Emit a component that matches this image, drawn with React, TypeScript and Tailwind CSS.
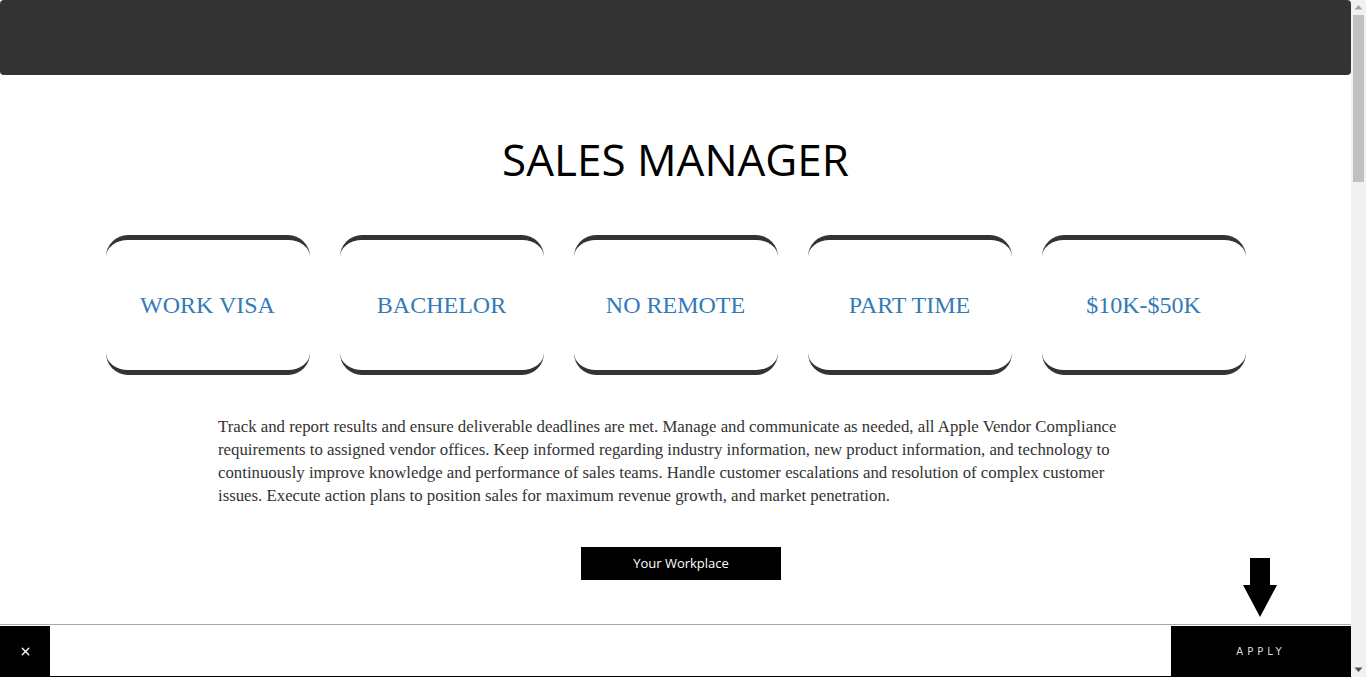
import { X } from 'lucide-react'

const tags = ['WORK VISA', 'BACHELOR', 'NO REMOTE', 'PART TIME', '$10K-$50K']

function TagCard({ label }: { label: string }) {
  return (
    <div className="flex h-[140px] w-[204px] items-center justify-center rounded-[22px] border-y-[5px] border-[#333] bg-white">
      <span className="font-['Liberation_Serif',serif] text-[24px] text-[#337ab7]">{label}</span>
    </div>
  )
}

function Scrollbar() {
  return (
    <aside className="fixed right-0 top-0 flex h-[677px] w-[15px] flex-col items-center bg-[#f1f1f1]">
      <svg width="15" height="15" viewBox="0 0 15 15">
        <path d="M3.5 9.5 H11.5 L7.5 5 Z" fill="#a3a3a3" />
      </svg>
      <div className="h-[167px] w-[11px] bg-[#c1c1c1]" />
      <div className="flex-1" />
      <svg width="15" height="15" viewBox="0 0 15 15">
        <path d="M3.5 5.5 H11.5 L7.5 10 Z" fill="#505050" />
      </svg>
    </aside>
  )
}

export default function App() {
  return (
    <div className="min-h-[677px] w-[1351px] bg-white">
      <header className="h-[75px] rounded-[4px] bg-[#333]" />

      <main className="mx-auto flex w-[1140px] flex-col items-center">
        <h1 className="mt-[62px] font-['Open_Sans',sans-serif] text-[44px] leading-none text-black">
          SALES MANAGER
        </h1>

        <div className="mt-[54px] flex w-full justify-between">
          {tags.map((t) => (
            <TagCard key={t} label={t} />
          ))}
        </div>

        <p className="mt-[40px] w-[915px] font-['Liberation_Serif',serif] text-[16.8px] leading-[23px] text-[#333]">
          Track and report results and ensure deliverable deadlines are met. Manage and communicate as needed, all
          Apple Vendor Compliance requirements to assigned vendor offices. Keep informed regarding industry
          information, new product information, and technology to continuously improve knowledge and performance of
          sales teams. Handle customer escalations and resolution of complex customer issues. Execute action plans to
          position sales for maximum revenue growth, and market penetration.
        </p>

        <button className="ml-[11px] mt-[40px] h-[33px] w-[200px] bg-black font-['Open_Sans',sans-serif] text-[13px] text-white">
          Your Workplace
        </button>
      </main>

      {/* apply arrow */}
      <div className="fixed bottom-[60px] right-[89px] flex flex-col items-center">
        <div className="h-[27px] w-[20px] bg-black" />
        <svg width="34" height="32" viewBox="0 0 34 32">
          <path d="M0 0 H34 L17 32 Z" fill="black" />
        </svg>
      </div>

      <footer className="fixed bottom-0 left-0 right-[15px] flex h-[53px] border-y border-t-[#aaa] border-b-black bg-white pt-px">
        <button className="flex w-[50px] items-center justify-center bg-black text-white">
          <X size={13} strokeWidth={2.5} />
        </button>
        <div className="flex-1" />
        <button className="flex w-[180px] items-center justify-center bg-black font-['DejaVu_Sans',sans-serif] text-[10px] tracking-[4px] text-[#ddd]">
          APPLY
        </button>
      </footer>

      <Scrollbar />
    </div>
  )
}
